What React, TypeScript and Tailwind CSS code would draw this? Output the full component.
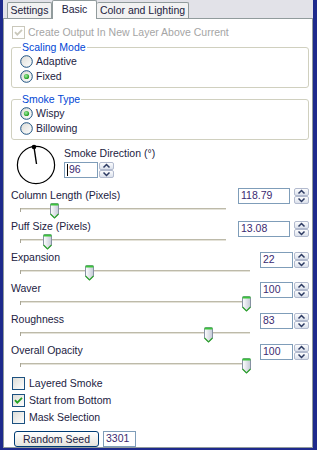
import React from 'react';

const FONT = { fontFamily: '"Liberation Sans", Arial, sans-serif' };

function Spinner() {
  return (
    <svg width="15" height="16" viewBox="0 0 15 16" className="shrink-0">
      <defs>
        <linearGradient id="spinGrad" x1="0" y1="0" x2="0" y2="1">
          <stop offset="0" stopColor="#ffffff" />
          <stop offset="1" stopColor="#d8deea" />
        </linearGradient>
      </defs>
      <rect x="0.5" y="0.5" width="14" height="7" rx="1.5" fill="url(#spinGrad)" stroke="#b2bace" />
      <rect x="0.5" y="8.5" width="14" height="7" rx="1.5" fill="url(#spinGrad)" stroke="#b2bace" />
      <path d="M4.5 5.5 L7.5 2.5 L10.5 5.5" stroke="#2c3a62" strokeWidth="1.5" fill="none" />
      <path d="M4.5 10.5 L7.5 13.5 L10.5 10.5" stroke="#2c3a62" strokeWidth="1.5" fill="none" />
    </svg>
  );
}

function Thumb({ left }: { left: number }) {
  return (
    <svg
      width="11"
      height="16"
      viewBox="0 0 11 16"
      className="absolute top-[1px]"
      style={{ left }}
    >
      <defs>
        <linearGradient id="thumbGrad" x1="0" y1="0" x2="1" y2="0">
          <stop offset="0" stopColor="#ffffff" />
          <stop offset="1" stopColor="#c4c9d6" />
        </linearGradient>
      </defs>
      <path
        d="M1.5 2 Q1.5 0.5 3 0.5 H8 Q9.5 0.5 9.5 2 V11 L5.5 15 L1.5 11 Z"
        fill="url(#thumbGrad)"
        stroke="#8791a3"
      />
      <rect x="1.5" y="0.5" width="8" height="2" fill="#3cc43c" />
      <path d="M1.5 11 L5.5 15 L9.5 11" stroke="#2ea32e" strokeWidth="1.2" fill="none" />
    </svg>
  );
}

function Checkbox({ checked, disabled }: { checked?: boolean; disabled?: boolean }) {
  return (
    <svg width="13" height="13" viewBox="0 0 13 13" className="shrink-0">
      <defs>
        <linearGradient id="cbGrad" x1="0" y1="0" x2="1" y2="1">
          <stop offset="0" stopColor="#dcdcd6" />
          <stop offset="1" stopColor="#ffffff" />
        </linearGradient>
      </defs>
      <rect
        x="0.5"
        y="0.5"
        width="12"
        height="12"
        fill={disabled ? '#ffffff' : 'url(#cbGrad)'}
        stroke={disabled ? '#cac8bb' : '#1c5180'}
      />
      {checked && (
        <path
          d="M3 6.2 L5.3 8.6 L10 3.8"
          stroke={disabled ? '#cac8bb' : '#21a121'}
          strokeWidth="1.8"
          fill="none"
        />
      )}
    </svg>
  );
}

function Radio({ checked }: { checked?: boolean }) {
  return (
    <svg width="13" height="13" viewBox="0 0 13 13" className="shrink-0">
      <defs>
        <linearGradient id="rdGrad" x1="0" y1="0" x2="1" y2="1">
          <stop offset="0" stopColor="#dcdcd6" />
          <stop offset="1" stopColor="#ffffff" />
        </linearGradient>
        <radialGradient id="rdDot" cx="0.4" cy="0.4" r="0.6">
          <stop offset="0" stopColor="#9ff09f" />
          <stop offset="1" stopColor="#1f9a1f" />
        </radialGradient>
      </defs>
      <circle cx="6.5" cy="6.5" r="5.8" fill="url(#rdGrad)" stroke="#1c5180" />
      {checked && <circle cx="6.5" cy="6.5" r="2.6" fill="url(#rdDot)" />}
    </svg>
  );
}

function NumBox({ value, w, caret }: { value: string; w: string; caret?: boolean }) {
  return (
    <div
      className={`${w} h-[16px] border border-[#7f9db9] bg-white flex items-center pl-[2px] text-[10.5px] text-[#3b2a70]`}
    >
      {caret && <span className="w-px h-[12px] bg-black mr-px" />}
      {value}
    </div>
  );
}

function Dial() {
  return (
    <svg width="42" height="42" viewBox="0 0 42 42" className="shrink-0">
      <circle cx="21" cy="21" r="18.6" fill="none" stroke="#000" strokeWidth="1.2" />
      <line x1="19" y1="3" x2="21.5" y2="20" stroke="#000" strokeWidth="1.4" />
      <circle cx="19" cy="3" r="2.3" fill="#000" />
    </svg>
  );
}

interface SliderRowProps {
  label: string;
  value: string;
  thumb: number;
  wide?: boolean;
  inputTop: string;
}

function SliderRow({ label, value, thumb, wide, inputTop }: SliderRowProps) {
  // thumb is page x of the thumb centre; content column starts at x=11
  const left = thumb - 11 - 5.5;
  return (
    <div className="flex h-[31px]">
      <div className="flex-1 flex flex-col">
        <div className="h-[14px] leading-[14px] text-[10.5px] text-[#22223f]">{label}</div>
        <div className="relative h-[17px]">
          <div
            className={`${wide ? 'w-[206px]' : 'w-[230px]'} ml-[9px] mt-[6px] h-[3px] border-t border-[#bdbaa9] border-b border-b-white bg-[#e4e2d8]`}
          />
          <div className="absolute left-[9px] top-[6px] w-px h-[4px] bg-[#a8a595]" />
          <Thumb left={left} />
        </div>
      </div>
      <div className={`flex ${inputTop} ${wide ? 'gap-[4px]' : 'gap-px'}`}>
        <NumBox value={value} w={wide ? 'w-[52px]' : 'w-[33px]'} />
        <Spinner />
      </div>
    </div>
  );
}

function CheckRow({ label, checked }: { label: string; checked?: boolean }) {
  return (
    <div className="flex items-center h-[17px] pl-px gap-[4px] text-[10.5px] text-[#22223f]">
      <Checkbox checked={checked} />
      <span>{label}</span>
    </div>
  );
}

export default function App() {
  return (
    <div
      className="w-[317px] h-[450px] bg-[#1e2a8c] pl-[3px] pr-[4px] pb-[4px] flex flex-col overflow-hidden"
      style={FONT}
    >
      <div className="flex-1 flex flex-col bg-[#e2e2e8]">
        {/* Tabs */}
        <div className="h-[18px] flex items-end pl-[4px] text-[10.5px] text-[#22223f]">
          <div className="h-[16px] w-[45px] border border-b-0 border-[#919b9c] rounded-t-[2px] bg-[#f2f2f2] flex items-center justify-center">
            Settings
          </div>
          <div className="relative z-10 h-[19px] -mb-px w-[45px] border border-b-0 border-[#919b9c] rounded-t-[2px] bg-white flex items-start pt-[1px] justify-center">
            Basic
          </div>
          <div className="h-[16px] w-[92px] border border-b-0 border-l-0 border-[#919b9c] rounded-t-[2px] bg-[#f2f2f2] flex items-center justify-center">
            Color and Lighting
          </div>
        </div>

        {/* Panel */}
        <div className="flex-1 bg-white border border-[#919b9c] pl-[7px] pr-[3px] flex flex-col overflow-hidden">
          <div className="mt-[7px] h-[13px] flex items-center gap-[3px] pl-px text-[10.5px] text-[#a5a5a5]">
            <Checkbox checked disabled />
            <span>Create Output In New Layer Above Current</span>
          </div>

          <fieldset className="mt-[2px] border border-[#d0d0bf] rounded-[3px] pl-[8px] pb-[3px]">
            <legend className="ml-[1px] px-[1px] text-[10.5px] leading-[13px] text-[#0046d5]">
              Scaling Mode
            </legend>
            <div className="h-[15px] flex items-center gap-[3px] text-[10.5px] text-[#22223f]">
              <Radio />
              <span>Adaptive</span>
            </div>
            <div className="h-[15px] flex items-center gap-[3px] text-[10.5px] text-[#22223f]">
              <Radio checked />
              <span>Fixed</span>
            </div>
          </fieldset>

          <fieldset className="mt-[5px] border border-[#d0d0bf] rounded-[3px] pl-[8px] pb-[3px]">
            <legend className="ml-[1px] px-[1px] text-[10.5px] leading-[13px] text-[#0046d5]">
              Smoke Type
            </legend>
            <div className="h-[15px] flex items-center gap-[3px] text-[10.5px] text-[#22223f]">
              <Radio checked />
              <span>Wispy</span>
            </div>
            <div className="h-[15px] flex items-center gap-[3px] text-[10.5px] text-[#22223f]">
              <Radio />
              <span>Billowing</span>
            </div>
          </fieldset>

          {/* Direction */}
          <div className="mt-[4px] flex pl-[4px]">
            <Dial />
            <div className="ml-[7px] mt-[3px] flex flex-col">
              <div className="h-[13px] leading-[13px] text-[10.5px] text-[#22223f]">Smoke Direction (°)</div>
              <div className="mt-[2px] flex gap-px">
                <NumBox value="96" w="w-[34px]" caret />
                <Spinner />
              </div>
            </div>
          </div>

          <div className="mt-[2px] flex flex-col">
            <SliderRow label="Column Length (Pixels)" value="118.79" thumb={54} wide inputTop="mt-0" />
            <SliderRow label="Puff Size (Pixels)" value="13.08" thumb={47} wide inputTop="mt-[2px]" />
            <SliderRow label="Expansion" value="22" thumb={89} inputTop="mt-[2px]" />
            <SliderRow label="Waver" value="100" thumb={246} inputTop="mt-px" />
            <SliderRow label="Roughness" value="83" thumb={208} inputTop="mt-px" />
            <SliderRow label="Overall Opacity" value="100" thumb={246} inputTop="mt-px" />
          </div>

          <div className="mt-px flex flex-col">
            <CheckRow label="Layered Smoke" />
            <CheckRow label="Start from Bottom" checked />
            <CheckRow label="Mask Selection" />
          </div>

          <div className="mt-[5px] flex items-start pl-[3px] gap-[4px]">
            <button className="w-[85px] h-[16px] rounded-[3px] border border-[#003c74] bg-gradient-to-b from-white to-[#e6e5de] text-[10.5px] leading-[14px] text-[#22223f]">
              Random Seed
            </button>
            <NumBox value="3301" w="w-[33px]" />
          </div>
        </div>
      </div>
    </div>
  );
}
